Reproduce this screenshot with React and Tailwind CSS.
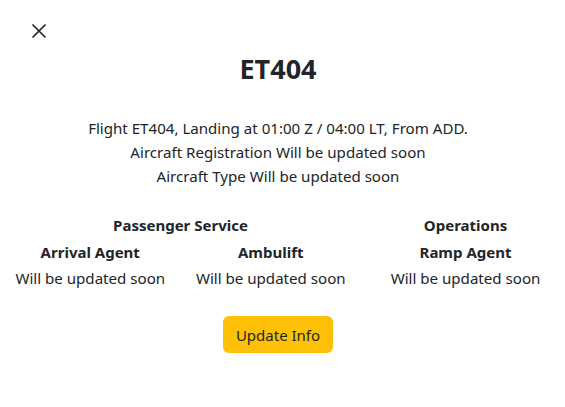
import React from "react";

const passengerCols = [
  { title: "Arrival Agent", value: "Will be updated soon" },
  { title: "Ambulift", value: "Will be updated soon" },
];

function App() {
  return (
    <div className="min-h-screen w-[565px] overflow-hidden bg-white text-[#212529] font-['Noto_Sans','Open_Sans',sans-serif]">
      <div className="h-[52px] pl-[32px] pt-[24px]">
        <button className="block w-[14px] h-[14px]">
          <svg width="14" height="14" viewBox="0 0 14 14" fill="none" stroke="#212529" strokeWidth="1.7" strokeLinecap="round">
            <path d="M1 1L13 13M13 1L1 13" />
          </svg>
        </button>
      </div>
      <div className="pr-[9px]">
        <h1 className="text-center text-[27px] font-bold leading-[34px]">ET404</h1>
        <div className="mt-[30px] text-center leading-6 text-[15.1px]">
          <p>Flight ET404, Landing at 01:00 Z / 04:00 LT, From ADD.</p>
          <p>Aircraft Registration Will be updated soon</p>
          <p>Aircraft Type Will be updated soon</p>
        </div>
      </div>
      <div className="mt-[25px] flex">
        <div className="w-[361px] shrink-0 text-center">
          <div className="font-bold leading-6 text-[15px]">Passenger Service</div>
          <div className="flex">
            {passengerCols.map((c) => (
              <div key={c.title} className="flex-1">
                <div className="font-bold leading-6 mt-[3px] text-[15px]">{c.title}</div>
                <div className="leading-6 mt-[2px] text-[15.1px]">{c.value}</div>
              </div>
            ))}
          </div>
        </div>
        <div className="w-[209px] shrink-0 text-center">
          <div className="font-bold leading-6 text-[15px]">Operations</div>
          <div className="font-bold leading-6 mt-[3px] text-[15px]">Ramp Agent</div>
          <div className="leading-6 mt-[2px] text-[15.1px]">Will be updated soon</div>
        </div>
      </div>
      <div className="mt-[26px] flex justify-center pr-[9px]">
        <button className="h-[37px] w-[110px] rounded-md bg-[#ffc107] text-[15px] leading-6 text-[#212529]">
          Update Info
        </button>
      </div>
    </div>
  );
}

export default App;
